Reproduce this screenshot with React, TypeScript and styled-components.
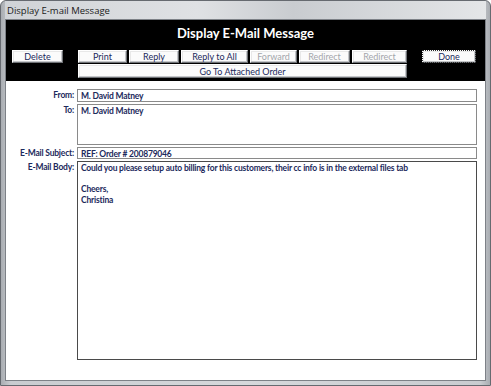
import React from 'react'
import styled, { createGlobalStyle, css } from 'styled-components'

const NAVY = '#1c2a5c'
const FONT = 'Lato, "Open Sans", sans-serif'

const GlobalStyle = createGlobalStyle`
  html, body {
    margin: 0;
    padding: 0;
    background: #ffffff;
  }
`

const Window = styled.div`
  box-sizing: border-box;
  width: 491px;
  height: 386px;
  display: flex;
  flex-direction: column;
  padding: 0 4px 4px;
  border: 1px solid #666a70;
  border-radius: 6px 6px 0 0;
  background: linear-gradient(90deg, #a9adb2 0%, #c9ccd0 2%, #d6d8db 50%, #c9ccd0 98%, #a9adb2 100%);
  overflow: hidden;
`

const TitleBar = styled.div`
  height: 18px;
  display: flex;
  align-items: center;
  padding-left: 2px;
  font-family: "Open Sans", "DejaVu Sans", sans-serif;
  font-size: 9.5px;
  color: #1b1b1b;
  background: linear-gradient(90deg, #d0d3d7 0%, #dfe1e4 40%, #c9ccd0 60%, #e4e6e8 100%);
`

const Client = styled.div`
  flex: 1;
  display: flex;
  flex-direction: column;
  border: 1px solid #7d8187;
  background: #ffffff;
`

const Header = styled.div`
  height: 61px;
  box-sizing: border-box;
  background: #000000;
  padding-top: 4px;
`

const HeaderTitle = styled.div`
  text-align: center;
  font-family: ${FONT};
  font-weight: 700;
  font-size: 13px;
  line-height: 18px;
  color: #ffffff;
  margin-bottom: 8px;
`

const ButtonBar = styled.div`
  display: flex;
  align-items: flex-start;
  padding: 0 9px 0 6px;
`

const ButtonGroup = styled.div`
  display: grid;
  grid-template-columns: 49px 50px 67px 47px 51px 55px;
  column-gap: 2px;
  row-gap: 1px;
  margin-left: 15px;
`

const Button = styled.button<{ $width?: number; $disabled?: boolean; $focused?: boolean; $span?: boolean }>`
  box-sizing: border-box;
  width: ${(p) => (p.$width ? `${p.$width}px` : 'auto')};
  height: ${(p) => (p.$span ? '14px' : '13px')};
  padding: 0;
  margin: 0;
  font-family: ${FONT};
  font-size: 9px;
  line-height: 11px;
  color: ${(p) => (p.$disabled ? '#a4a6ab' : NAVY)};
  background: #fbfbfb;
  border: 1px solid;
  border-color: #ffffff #6f7276 #6f7276 #ffffff;
  box-shadow: inset -1px -1px 0 #c4c6c9, inset 1px 1px 0 #e8e8e8;
  cursor: pointer;
  ${(p) => p.$span && css`grid-column: 1 / -1;`}
  ${(p) =>
    p.$focused &&
    css`
      outline: 1px dotted #2a2a2a;
      outline-offset: -1px;
    `}
`

const DoneButton = styled(Button)`
  margin-left: auto;
`

const Form = styled.div`
  display: grid;
  grid-template-columns: 68px 400px;
  grid-template-rows: 13px 41px 12px 199px;
  column-gap: 3px;
  row-gap: 2px;
  padding-top: 8px;
`

const textStyle = css`
  font-family: ${FONT};
  font-weight: 700;
  font-size: 8.5px;
  letter-spacing: -0.2px;
  color: ${NAVY};
`

const Label = styled.div`
  ${textStyle}
  text-align: right;
  line-height: 11px;
  padding-top: 1px;
  white-space: nowrap;
`

const Field = styled.div<{ $dark?: boolean }>`
  ${textStyle}
  box-sizing: border-box;
  border: 1px solid ${(p) => (p.$dark ? '#4a4a4a' : '#8a8a8a')};
  padding: 1px 3px 0;
  line-height: 10.5px;
  white-space: pre-wrap;
  overflow: hidden;
`

const bodyText = `Could you please setup auto billing for this customers, their cc info is in the external files tab

Cheers,
Christina`

const App: React.FC = () => {
  return (
    <>
      <GlobalStyle />
      <Window>
        <TitleBar>Display E-mail Message</TitleBar>
        <Client>
          <Header>
            <HeaderTitle>Display E-Mail Message</HeaderTitle>
            <ButtonBar>
              <Button $width={51}>Delete</Button>
              <ButtonGroup>
                <Button>Print</Button>
                <Button>Reply</Button>
                <Button>Reply to All</Button>
                <Button $disabled>Forward</Button>
                <Button $disabled>Redirect</Button>
                <Button $disabled>Redirect</Button>
                <Button $span>Go To Attached Order</Button>
              </ButtonGroup>
              <DoneButton $width={54} $focused>
                Done
              </DoneButton>
            </ButtonBar>
          </Header>
          <Form>
            <Label>From:</Label>
            <Field>M. David Matney</Field>
            <Label>To:</Label>
            <Field>M. David Matney</Field>
            <Label>E-Mail Subject:</Label>
            <Field>REF: Order # 200879046</Field>
            <Label>E-Mail Body:</Label>
            <Field $dark>{bodyText}</Field>
          </Form>
        </Client>
      </Window>
    </>
  )
}

export default App
